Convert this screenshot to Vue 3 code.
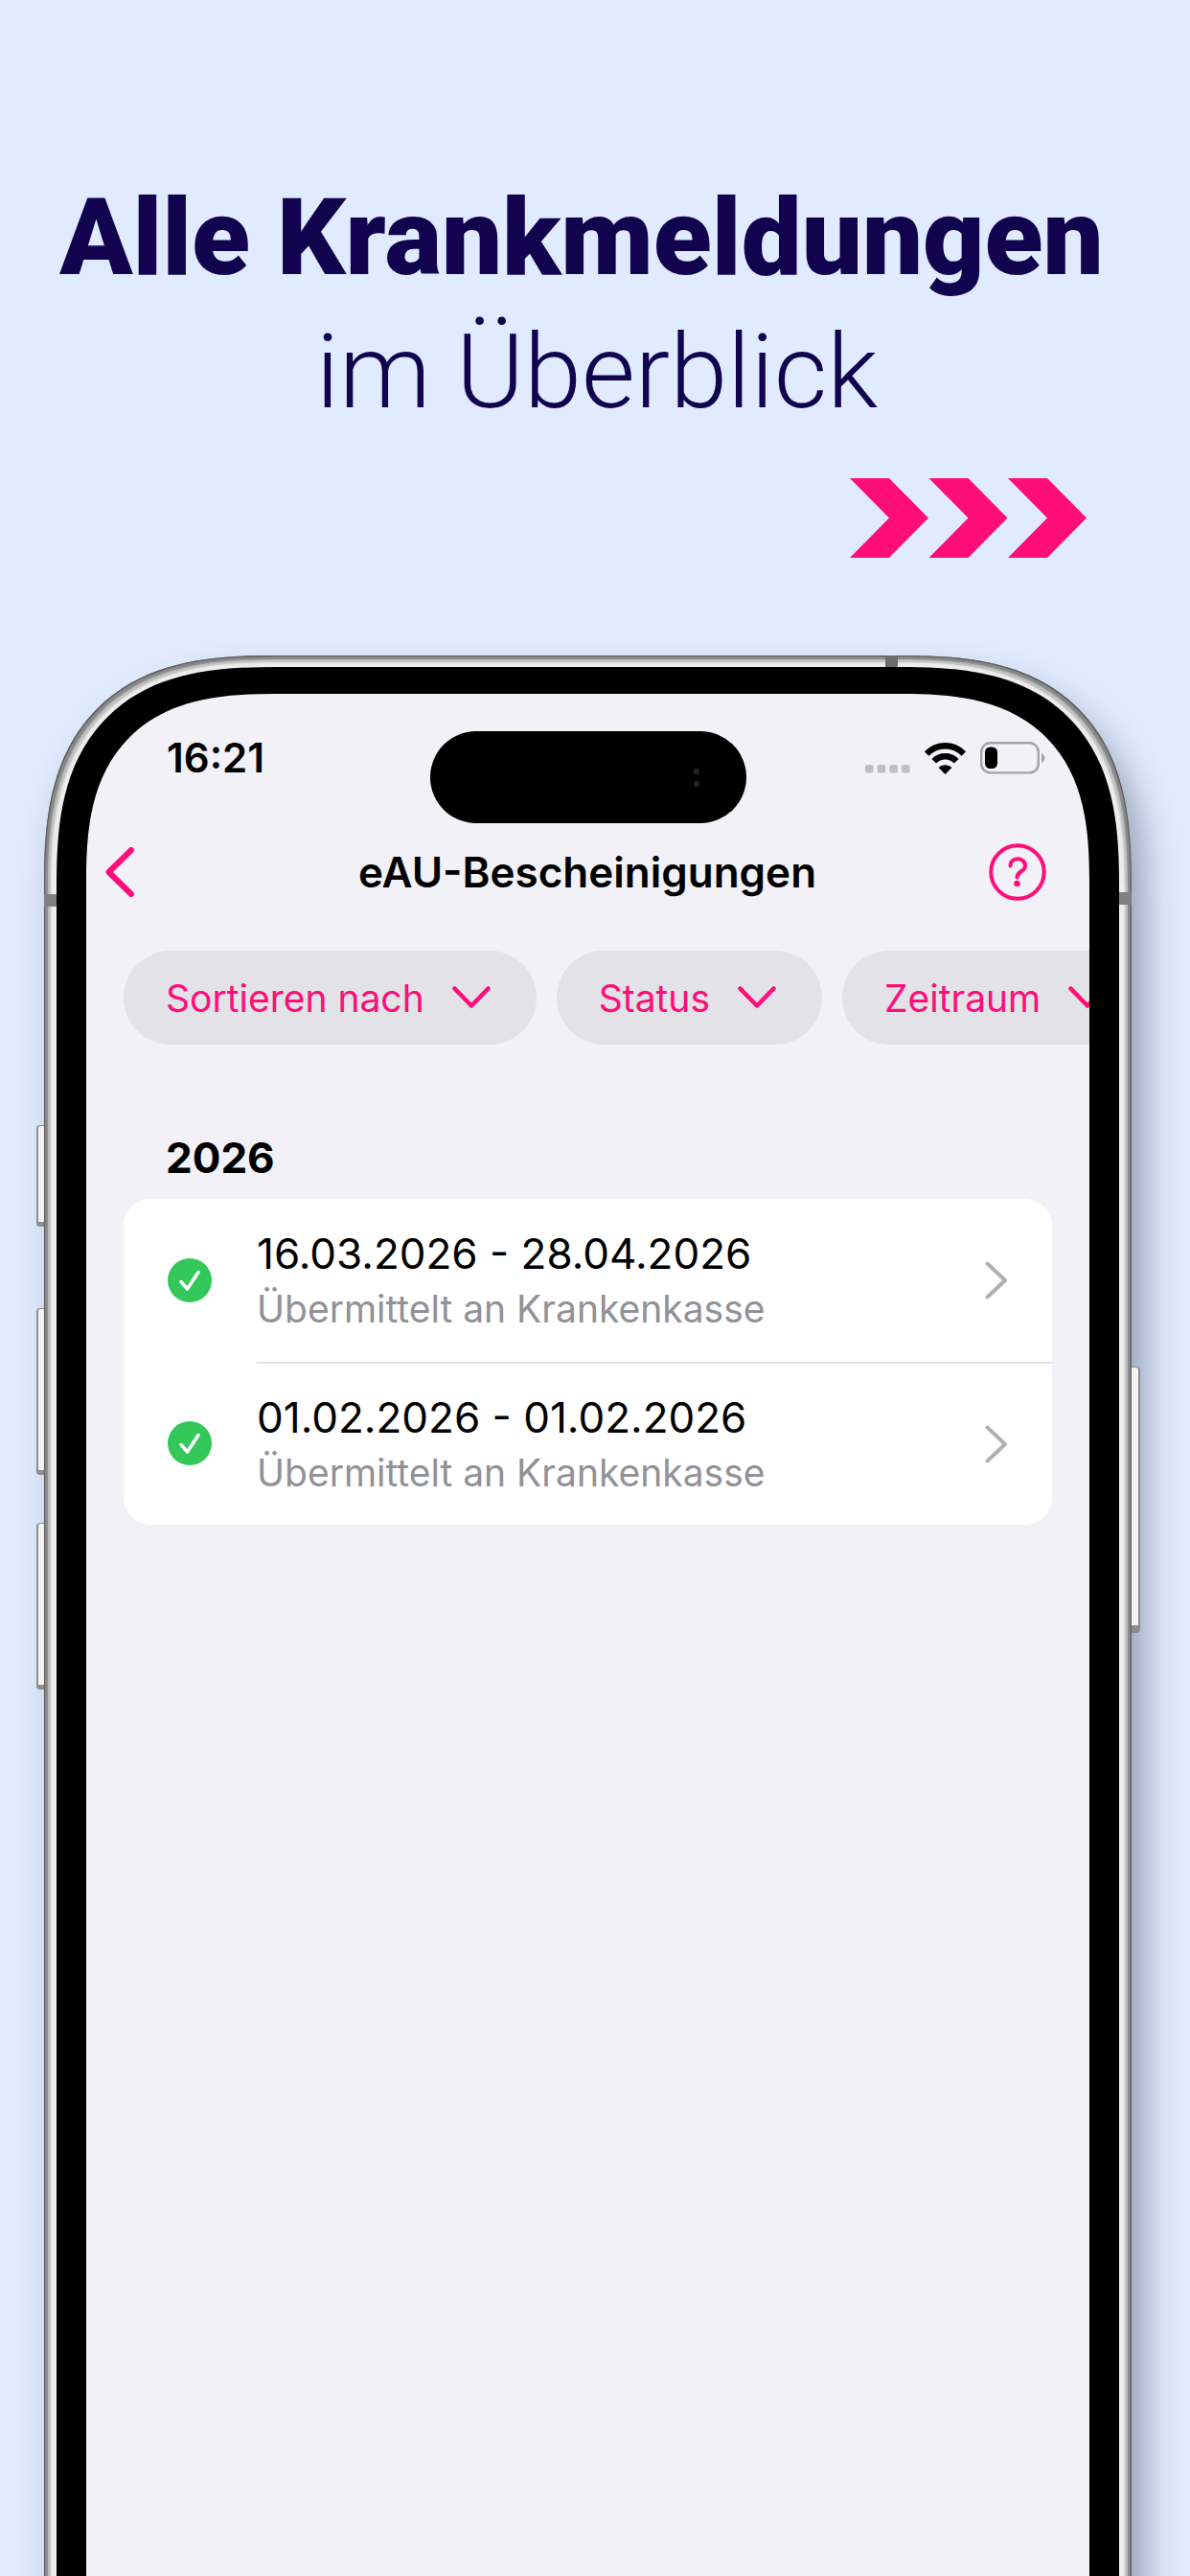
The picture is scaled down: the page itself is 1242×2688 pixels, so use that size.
<script setup>
    import { ref } from 'vue';

    const filters = ref(['Sortieren nach', 'Status', 'Zeitraum']);

    const groups = ref([
        {
            year: '2026',
            items: [
                { id: 1, period: '16.03.2026 - 28.04.2026', status: 'Übermittelt an Krankenkasse' },
                { id: 2, period: '01.02.2026 - 01.02.2026', status: 'Übermittelt an Krankenkasse' },
            ],
        },
    ]);
</script>

<template>
  <div class="page">
    <header class="hero">
        <h1>Alle Krankmeldungen</h1>
        <p>im Überblick</p>
        <svg class="arrows" viewBox="0 0 247 83" aria-hidden="true">
            <path d="M0 0H41L82 41.5L41 83H0L41 41.5Z" />
            <path d="M82.5 0H123.5L164.5 41.5L123.5 83H82.5L123.5 41.5Z" />
            <path d="M165 0H206L247 41.5L206 83H165L206 41.5Z" />
        </svg>
    </header>

    <div class="phone">
        <span class="key action"></span>
        <span class="key volumeUp"></span>
        <span class="key volumeDown"></span>
        <span class="key power"></span>
        <span class="band bandLeft"></span>
        <span class="band bandRight"></span>
        <span class="band bandTop"></span>

        <div class="bezel">
            <div class="screen">
                <div class="statusBar">
                    <span class="time">16:21</span>
                    <div class="island"><i></i><i></i></div>
                    <div class="statusIcons">
                        <svg class="cell" viewBox="0 0 47 9" aria-hidden="true">
                            <rect v-for="n in 4" :key="n" :x="(n - 1) * 12.7" y="0" width="8.5" height="8.5" rx="2.5" />
                        </svg>
                        <svg class="wifi" viewBox="0 0 45 33" aria-hidden="true">
                            <path class="arc" d="M3.2 11.6C14 .5 31 .5 41.8 11.6" />
                            <path class="arc" d="M10.8 19.3C17.2 12.7 27.8 12.7 34.2 19.3" />
                            <path d="M22.5 33L15.6 26.1C19 22.4 26 22.4 29.4 26.1Z" />
                        </svg>
                        <svg class="battery" viewBox="0 0 69 34" aria-hidden="true">
                            <rect class="shell" x="1.2" y="1.2" width="59.6" height="31.2" rx="9.5" />
                            <rect x="5" y="5.5" width="13" height="22.5" rx="5.5" />
                            <path class="nub" d="M64 12.2C68.6 13.4 68.6 20.6 64 21.8Z" />
                        </svg>
                    </div>
                </div>

                <nav class="navBar">
                    <button class="back" aria-label="Zurück">
                        <svg viewBox="0 0 30 52"><path d="M27 3L3.5 26L27 49" /></svg>
                    </button>
                    <h2>eAU-Bescheinigungen</h2>
                    <button class="help" aria-label="Hilfe">
                        <svg viewBox="0 0 60 60">
                            <circle cx="30" cy="30" r="27.7" />
                            <path d="M22.5 23.5C22.5 14 38 14 38 23.4C38 29.5 29.5 29 29.5 35.5" />
                            <circle class="dot" cx="29.5" cy="42" r="3.2" />
                        </svg>
                    </button>
                </nav>

                <div class="filters">
                    <button v-for="f in filters" :key="f">
                        {{ f }}
                        <svg viewBox="0 0 40 24" aria-hidden="true"><path d="M2.5 2.5L20 20.5L37.5 2.5" /></svg>
                    </button>
                </div>

                <section v-for="g in groups" :key="g.year">
                    <h3>{{ g.year }}</h3>
                    <ul>
                        <li v-for="item in g.items" :key="item.id">
                            <a href="#">
                                <svg class="check" viewBox="0 0 46 46" aria-hidden="true">
                                    <circle cx="23" cy="23" r="23" />
                                    <path d="M14 24.5L20.5 32L32 14.5" />
                                </svg>
                                <div class="entry">
                                    <div>
                                        <h4>{{ item.period }}</h4>
                                        <p>{{ item.status }}</p>
                                    </div>
                                    <svg class="chevron" viewBox="0 0 24 40" aria-hidden="true"><path d="M2.5 2.5L21 20L2.5 37.5" /></svg>
                                </div>
                            </a>
                        </li>
                    </ul>
                </section>
            </div>
        </div>
    </div>
  </div>
</template>

<style>
    body {
        margin: 0;
        background: #e0ebff;
    }
</style>

<style scoped>
    .page {
        box-sizing: border-box;
        display: flex;
        flex-direction: column;
        min-height: 100vh;
        overflow: hidden;
        background: #e0ebff;
        color: #000;
        font-family: Inter, Roboto, sans-serif;
    }
    h1, h2, h3, h4, p, ul {
        margin: 0;
        padding: 0;
    }
    button {
        border: none;
        background: none;
        padding: 0;
        font-family: inherit;
        cursor: pointer;
    }
    svg {
        display: block;
        flex: none;
    }

    /* headline */
    .hero {
        display: flex;
        flex-direction: column;
        padding: 178px 108px 102px 80px;
        color: #12034f;
        font-family: Roboto, sans-serif;
        text-align: center;
        white-space: nowrap;
    }
    .hero h1 {
        display: flex;
        justify-content: center;
        font-size: 112px;
        font-weight: 900;
        line-height: 140px;
    }
    .hero p {
        padding-left: 32px;
        font-size: 108px;
        font-weight: 300;
        line-height: 140px;
    }
    .arrows {
        align-self: flex-end;
        width: 247px;
        height: 83px;
        margin-top: 41px;
        fill: #ff0d78;
    }

    /* device */
    .phone {
        position: relative;
        display: flex;
        flex: 1;
        margin: 0 61px -20px 46px;
        padding: 12px 13px 0;
        border-radius: 196px 196px 0 0;
        background: #ededeb;
        box-shadow:
            inset 0 0 1px 1px #555,
            inset 0 0 1px 4px #8a8a8a,
            inset 0 0 2px 7px #bdbdbd,
            14px 24px 36px rgba(60, 70, 95, 0.45);
    }
    .bezel {
        display: flex;
        flex: 1;
        min-width: 0;
        padding: 28px 31px 0;
        border-radius: 184px 184px 0 0;
        background: #000;
    }
    .screen {
        flex: 1;
        min-width: 0;
        overflow: hidden;
        border-radius: 154px 154px 0 0;
        background: #f2f1f7;
    }
    /* smooth corners where the browser can draw them */
    @supports (corner-shape: superellipse(1.4)) {
        .phone, .bezel, .screen {
            corner-shape: superellipse(1.4);
        }
        .phone {
            border-radius: 240px 240px 0 0;
        }
        .bezel {
            border-radius: 228px 228px 0 0;
        }
        .screen {
            border-radius: 196px 196px 0 0;
        }
    }
    .key {
        position: absolute;
        left: -8px;
        box-sizing: border-box;
        width: 8px;
        border: 1px solid #8d8d8d;
        border-width: 1px 0 5px 2px;
        border-radius: 4px 0 0 4px;
        background: #f3f3f1;
    }
    .action {
        top: 490px;
        height: 106px;
    }
    .volumeUp {
        top: 681px;
        height: 174px;
    }
    .volumeDown {
        top: 905px;
        height: 174px;
    }
    .power {
        top: 742px;
        right: -9px;
        left: auto;
        width: 9px;
        height: 278px;
        border-width: 1px 2px 8px 0;
        border-radius: 0 4px 4px 0;
    }
    .band {
        position: absolute;
        width: 13px;
        height: 13px;
        background: #808080;
    }
    .bandLeft {
        top: 249px;
        left: 0;
    }
    .bandRight {
        top: 247px;
        right: 0;
    }
    .bandTop {
        top: 0;
        right: 244px;
        height: 12px;
        background: #6c6c6c;
    }

    /* status bar */
    .statusBar {
        display: grid;
        grid-template-columns: 1fr auto 1fr;
        padding: 39px 45px 0 84px;
    }
    .time {
        font-size: 42px;
        font-weight: 600;
        line-height: 56px;
    }
    .island {
        box-sizing: border-box;
        display: flex;
        flex-direction: column;
        align-items: flex-end;
        justify-content: center;
        gap: 7px;
        width: 330px;
        height: 96px;
        margin-right: 38px;
        padding-right: 49px;
        border-radius: 48px;
        background: #000;
    }
    .island i {
        width: 6px;
        height: 6px;
        border-radius: 50%;
        background: #26262c;
    }
    .statusIcons {
        display: flex;
        justify-content: flex-end;
        height: 56px;
        align-items: center;
        gap: 14px;
    }
    .cell {
        width: 47px;
        height: 9px;
        margin-top: 22px;
        fill: #bfbec4;
    }
    .wifi {
        width: 45px;
        height: 33px;
    }
    .arc {
        fill: none;
        stroke: #000;
        stroke-width: 6.5;
    }
    .battery {
        width: 69px;
        height: 34px;
    }
    .shell {
        fill: none;
        stroke: #a3a2a7;
        stroke-width: 2.4;
    }
    .nub {
        fill: #a3a2a7;
    }

    /* navigation */
    .navBar {
        display: grid;
        grid-template-columns: 1fr auto 1fr;
        align-items: center;
        padding: 21px 45px 0 20px;
    }
    .navBar h2 {
        margin-left: 24px;
        font-size: 44px;
        font-weight: 600;
        line-height: 60px;
    }
    .navBar path, .navBar circle {
        fill: none;
        stroke: #ff0d78;
        stroke-linecap: round;
        stroke-linejoin: round;
    }
    .back {
        justify-self: start;
    }
    .back svg {
        width: 30px;
        height: 52px;
    }
    .back path {
        stroke-width: 6;
    }
    .help {
        justify-self: end;
    }
    .help svg {
        width: 60px;
        height: 60px;
    }
    .help path, .help circle {
        stroke-width: 4;
    }
    .help .dot {
        fill: #ff0d78;
        stroke: none;
    }

    /* filter chips */
    .filters {
        display: flex;
        gap: 21px;
        padding: 52px 0 0 39px;
    }
    .filters button {
        display: flex;
        flex: none;
        align-items: center;
        gap: 29px;
        height: 98px;
        padding: 0 48px 0 44px;
        border-radius: 49px;
        background: #e3e2e7;
        color: #ff0d78;
        font-size: 39px;
    }
    .filters svg {
        width: 40px;
        height: 24px;
    }
    .filters path {
        fill: none;
        stroke: #ff0d78;
        stroke-width: 4.5;
        stroke-linecap: round;
        stroke-linejoin: round;
    }

    /* list */
    section {
        padding: 88px 39px 0;
    }
    h3 {
        padding-left: 44px;
        font-size: 44px;
        font-weight: 700;
        line-height: 60px;
    }
    ul {
        margin-top: 13px;
        border-radius: 28px;
        background: #fff;
        list-style-type: none;
    }
    li a {
        display: flex;
        align-items: center;
        padding-left: 46px;
        color: #000;
        text-decoration: none;
    }
    .check {
        width: 46px;
        height: 46px;
        fill: #34c759;
    }
    .check path {
        fill: none;
        stroke: #fff;
        stroke-width: 3.5;
        stroke-linecap: round;
        stroke-linejoin: round;
    }
    .entry {
        box-sizing: border-box;
        display: flex;
        flex: 1;
        align-items: center;
        justify-content: space-between;
        height: 170px;
        margin-left: 47px;
        padding-right: 46px;
    }
    li + li .entry {
        border-top: 2px solid #e4e4e6;
    }
    h4 {
        font-size: 44px;
        font-weight: 400;
        line-height: 60px;
    }
    .entry p {
        color: #919196;
        font-size: 39px;
        line-height: 56px;
    }
    .chevron {
        width: 24px;
        height: 40px;
    }
    .chevron path {
        fill: none;
        stroke: #b0b0b2;
        stroke-width: 4;
        stroke-linecap: round;
        stroke-linejoin: round;
    }
</style>
